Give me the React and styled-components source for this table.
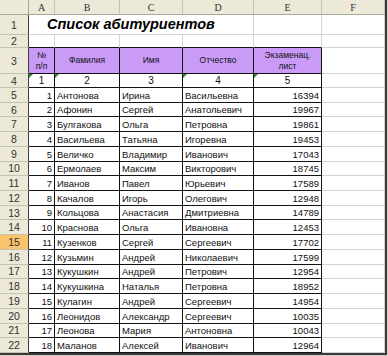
import React from "react";
import styled, { createGlobalStyle, css } from "styled-components";

const GlobalStyle = createGlobalStyle`
  html, body {
    margin: 0;
    padding: 0;
    background: #d4d0c8;
  }
`;

const students = [
  [1, "Антонова", "Ирина", "Васильевна", 16394],
  [2, "Афонин", "Сергей", "Анатольевич", 19967],
  [3, "Булгакова", "Ольга", "Петровна", 19861],
  [4, "Васильева", "Татьяна", "Игоревна", 19453],
  [5, "Величко", "Владимир", "Иванович", 17043],
  [6, "Ермолаев", "Максим", "Викторович", 18745],
  [7, "Иванов", "Павел", "Юрьевич", 17589],
  [8, "Качалов", "Игорь", "Олегович", 12948],
  [9, "Кольцова", "Анастасия", "Дмитриевна", 14789],
  [10, "Краснова", "Ольга", "Ивановна", 12453],
  [11, "Кузенков", "Сергей", "Сергеевич", 17702],
  [12, "Кузьмин", "Андрей", "Николаевич", 17599],
  [13, "Кукушкин", "Андрей", "Петрович", 12954],
  [14, "Кукушкина", "Наталья", "Петровна", 18952],
  [15, "Кулагин", "Андрей", "Сергеевич", 14954],
  [16, "Леонидов", "Александр", "Сергеевич", 10035],
  [17, "Леонова", "Мария", "Антоновна", 10043],
  [18, "Маланов", "Алексей", "Иванович", 12964],
];

const columns = ["A", "B", "C", "D", "E", "F"];
const headers = ["№\nп/п", "Фамилия", "Имя", "Отчество", "Экзаменац.\nлист"];

const Frame = styled.div`
  width: 385px;
  height: 353px;
  border-right: 2px solid #3a3a3a;
  border-bottom: 2px solid #3a3a3a;
  overflow: hidden;
  background: #fff;
`;

const Sheet = styled.div`
  display: grid;
  grid-template-columns: 29px 26px 65px 63px 71px 68px 63px;
  grid-template-rows: 15px 20px 13px 26px 14px repeat(18, 14.72px);
  font-family: "Liberation Sans", Arial, sans-serif;
  color: #111;
`;

const Corner = styled.div`
  background: #ece9d8;
  border-right: 1px solid #aca899;
  border-bottom: 1px solid #aca899;
`;

const ColHead = styled.div`
  background: #ece9d8;
  border-right: 1px solid #c5c2b2;
  border-bottom: 1px solid #aca899;
  display: flex;
  align-items: center;
  justify-content: center;
  font-family: "Liberation Serif", "Times New Roman", serif;
  font-size: 10px;
  color: #333;
`;

const RowHead = styled.div`
  background: ${(p) => (p.$active ? "#f9c46b" : "#ece9d8")};
  border-right: 1px solid #3c3c3c;
  border-bottom: 1px solid #c5c2b2;
  display: flex;
  align-items: center;
  justify-content: center;
  font-size: 10.5px;
  color: #333;
`;

const Cell = styled.div`
  position: relative;
  box-sizing: border-box;
  border-right: 1px solid ${(p) => (p.$boxed ? "#111" : "#d4d4d4")};
  border-bottom: 1px solid ${(p) => (p.$boxed || p.$edge ? "#111" : "#d4d4d4")};
  background: ${(p) => p.$fill || "#fff"};
  display: flex;
  align-items: flex-end;
  justify-content: ${(p) =>
    p.$align === "right" ? "flex-end" : p.$align === "center" ? "center" : "flex-start"};
  padding: 0 2px 1px 2px;
  font-size: 9.5px;
  line-height: 11px;
  white-space: nowrap;
  overflow: hidden;
  ${(p) =>
    p.$flag &&
    css`
      &::before {
        content: "";
        position: absolute;
        left: 0;
        top: 0;
        border-top: 4px solid #2e8b2e;
        border-right: 4px solid transparent;
      }
    `}
`;

const Title = styled(Cell)`
  grid-column: span 4;
  align-items: center;
  padding-left: 18px;
  font-size: 14.5px;
  font-weight: bold;
  font-style: italic;
  color: #000;
`;

const HeadCell = styled(Cell)`
  align-items: center;
  justify-content: center;
  text-align: center;
  white-space: pre-line;
  font-size: 8.5px;
  line-height: 11px;
  padding: 0 1px;
`;

const App = () => {
  return (
    <>
      <GlobalStyle />
      <Frame>
        <Sheet>
          <Corner />
          {columns.map((c) => (
            <ColHead key={c}>{c}</ColHead>
          ))}

          <RowHead>1</RowHead>
          <Title>Список абитуриентов</Title>
          <Cell />
          <Cell />

          <RowHead>2</RowHead>
          {[0, 1, 2, 3, 4].map((i) => (
            <Cell key={i} $edge />
          ))}
          <Cell />

          <RowHead>3</RowHead>
          {headers.map((h) => (
            <HeadCell key={h} $boxed $fill="#c99bf7">
              {h}
            </HeadCell>
          ))}
          <Cell />

          <RowHead>4</RowHead>
          {[1, 2, 3, 4, 5].map((n) => (
            <Cell key={n} $boxed $align="center" $flag={n !== 3} style={{ fontSize: "10px" }}>
              {n}
            </Cell>
          ))}
          <Cell />

          {students.map(([n, last, first, middle, score], i) => (
            <React.Fragment key={n}>
              <RowHead $active={i + 5 === 15}>{i + 5}</RowHead>
              <Cell $boxed $align="right">{n}</Cell>
              <Cell $boxed>{last}</Cell>
              <Cell $boxed>{first}</Cell>
              <Cell $boxed>{middle}</Cell>
              <Cell $boxed $align="right">{score}</Cell>
              <Cell />
            </React.Fragment>
          ))}
        </Sheet>
      </Frame>
    </>
  );
};

export default App;
